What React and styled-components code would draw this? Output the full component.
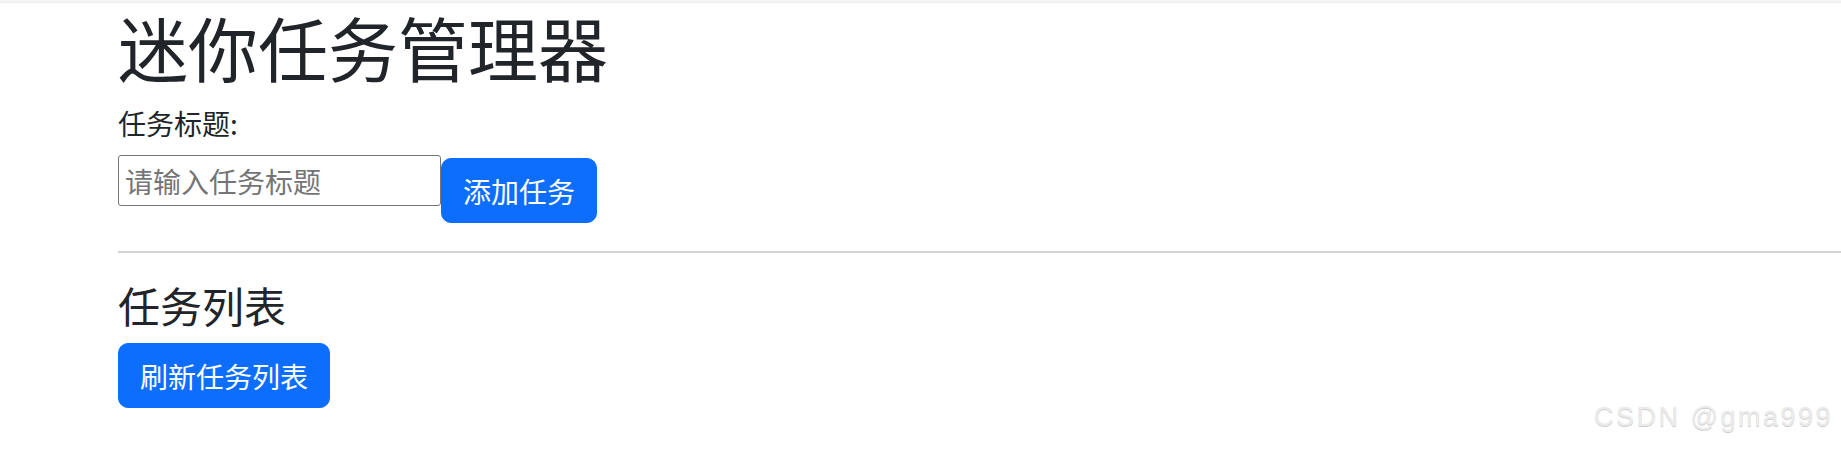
import React from 'react'
import styled, { createGlobalStyle } from 'styled-components'

const GlobalStyle = createGlobalStyle`
  body {
    margin: 0;
    background: #fff;
    font-family: "Noto Sans CJK SC", "Noto Sans", sans-serif;
    color: #212529;
  }
`;

const App = () => {
  return (
    <Page>
      <GlobalStyle />
      <TopLine />
      <Container>
        <Title>迷你任务管理器</Title>
        <Label htmlFor="task-title">任务标题:</Label>
        <FormRow>
          <Input id="task-title" placeholder="请输入任务标题" />
          <Button $offset={3}>添加任务</Button>
        </FormRow>
        <Divider />
        <SubTitle>任务列表</SubTitle>
        <Button>刷新任务列表</Button>
      </Container>
      <Watermark>CSDN @gma999</Watermark>
    </Page>
  );
}

const Page = styled.div`
  position: relative;
  width: 100%;
  height: 453px;
  overflow: hidden;
`;

const TopLine = styled.div`
  height: 3px;
  background: linear-gradient(#f7f7f7, #ececec);
`;

const Container = styled.div`
  display: flex;
  flex-direction: column;
  align-items: flex-start;
  padding-left: 118px;
`;

const Title = styled.h1`
  margin: 2px 0 0;
  font-size: 70px;
  font-weight: 400;
  line-height: 84px;
  color: #212529;
`;

const Label = styled.label`
  margin-top: 13px;
  font-size: 28px;
  line-height: 42px;
  color: #212529;
`;

const FormRow = styled.div`
  display: flex;
  align-items: flex-start;
  margin-top: 11px;
`;

const Input = styled.input`
  box-sizing: border-box;
  width: 323px;
  height: 51px;
  margin: 0;
  padding: 0 6px;
  border: 1px solid #767676;
  border-radius: 3px;
  font-family: inherit;
  font-size: 28px;
  color: #212529;
  outline: none;
  &::placeholder {
    color: #757575;
  }
`;

const Button = styled.button`
  box-sizing: border-box;
  margin-top: ${p => p.$offset || 0}px;
  padding: 0 21px;
  height: 65px;
  border: 1px solid #0d6efd;
  border-radius: 10px;
  background: #0d6efd;
  color: #fff;
  font-family: inherit;
  font-size: 28px;
  line-height: 42px;
  cursor: pointer;
`;

const Divider = styled.hr`
  align-self: stretch;
  margin: 28px 0 0;
  border: 0;
  border-top: 2px solid #d2d3d4;
`;

const SubTitle = styled.h2`
  margin: 26px 0 0;
  font-size: 42px;
  font-weight: 400;
  line-height: 52px;
  color: #212529;
  & + button {
    margin-top: 12px;
  }
`;

const Watermark = styled.div`
  position: absolute;
  right: 8px;
  bottom: 20px;
  font-family: "Liberation Sans", Arial, sans-serif;
  font-size: 27px;
  letter-spacing: 2.5px;
  color: #ebebeb;
  text-shadow: 0 1px 0 #cfcfcf, 0 -1px 0 #fbfbfb;
`;

export default App
